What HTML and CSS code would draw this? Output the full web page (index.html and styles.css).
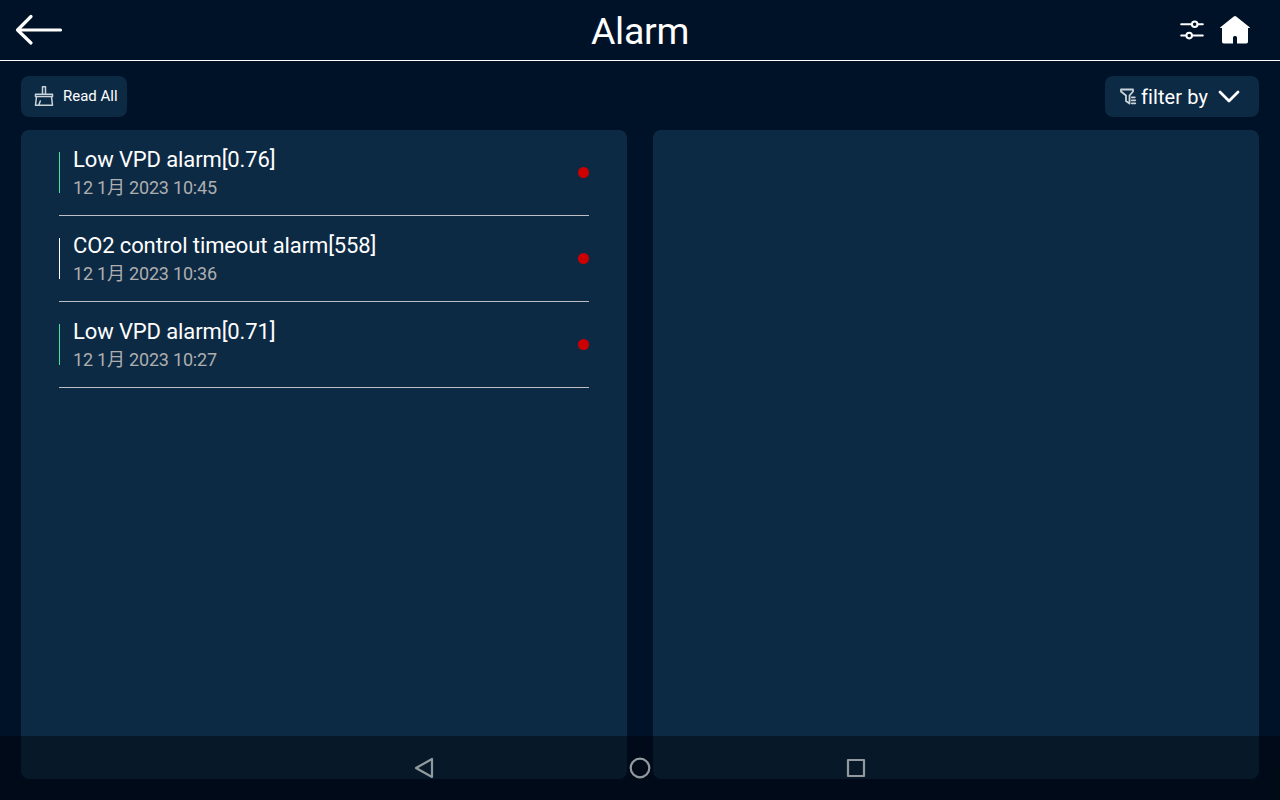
FILE: index.html
```html
<!DOCTYPE html>
<html lang="en">
<head>
<meta charset="utf-8">
<title>Alarm</title>
<link rel="stylesheet" href="styles.css">
</head>
<body>
<header class="header">
  <svg class="back" width="48" height="32" viewBox="0 0 48 32"><path d="M16 2.500 2.500 16 16 29M2.500 16H45.500" /></svg>
  <h1 class="title">Alarm</h1>
  <div class="actions">
    <svg class="sliders" width="24" height="20" viewBox="0 0 24 20"><path d="M1.200 4.300h10.500M17.500 4.300H22.800M1.200 15.600h5M12 15.600h10.800"/><circle cx="14.700" cy="4.300" r="2.800"/><circle cx="9.200" cy="15.600" r="2.800"/></svg>
    <svg class="home" width="30" height="28" viewBox="0 0 30 28"><path d="M13.800.6q1.200-1 2.400 0L29.600 11.200q.8.800-.2.800H28v13.800q0 1.700-1.700 1.700H17v-6q0-1.500-1.500-1.500h-1q-1.500 0-1.500 1.500v6H3.700q-1.700 0-1.700-1.700V12H.6q-1 0-.2-.8z"/></svg>
  </div>
</header>
<div class="toolbar">
  <button class="button read"><svg width="20" height="22" viewBox="0 0 20 22"><path d="M8.500 7.500V.8h3v6.700M1.500 8.300h17v2.200h-17zM2.500 10.500 1.500 19.300h17l-1-8.800M4.800 19l1.500-4"/></svg><span>Read All</span></button>
  <button class="button filter"><svg width="17" height="18" viewBox="0 0 17 18"><path d="M1 1.500h12v2L9.500 7.500v8L6 13V7.500L1 3.500zM11.800 9.300h3M11.800 12.300h3.500M11.800 15.300h3.500"/></svg><span>filter by</span><svg class="chevron" width="22" height="14" viewBox="0 0 22 14"><path d="m2 2 9 9 9-9"/></svg></button>
</div>
<main class="panels">
  <section class="panel">
    <article class="alarm"><div class="copy active"><h2>Low VPD alarm[0.76]</h2><time>12 1月 2023 10:45</time></div><i class="dot"></i></article>
    <article class="alarm"><div class="copy"><h2>CO2 control timeout alarm[558]</h2><time>12 1月 2023 10:36</time></div><i class="dot"></i></article>
    <article class="alarm"><div class="copy active"><h2>Low VPD alarm[0.71]</h2><time>12 1月 2023 10:27</time></div><i class="dot"></i></article>
  </section>
  <section class="panel"></section>
</main>
<nav class="system">
  <svg width="24" height="24" viewBox="0 0 24 24"><path d="M20 3v18L4 12z"/></svg>
  <svg width="24" height="24" viewBox="0 0 24 24"><circle cx="12" cy="12" r="9.300"/></svg>
  <svg width="24" height="24" viewBox="0 0 24 24"><path d="M4 4h16v16H4z"/></svg>
</nav>
</body>
</html>
```
FILE: styles.css
```css
* { box-sizing: border-box; }
body { margin: 0; height: 800px; overflow: hidden; background: #001228; color: #fff; font-family: Roboto, "Noto Sans CJK SC", sans-serif; display: flex; flex-direction: column; }
h1, h2 { margin: 0; font-weight: 400; }
svg { display: block; flex: none; fill: none; stroke: #fff; stroke-linecap: round; stroke-linejoin: round; }
.header { height: 61px; flex: none; border-bottom: 1px solid #fff; padding: 0 30px 0 15px; display: grid; grid-template-columns: 1fr auto 1fr; align-items: center; }
.back { stroke-width: 3.200; margin-top: -1px; }
.title { font-size: 37.500px; line-height: 44px; letter-spacing: -.3px; margin-top: 1px; transform: translateX(7.500px); }
.actions { display: flex; justify-content: flex-end; align-items: center; gap: 16px; }
.sliders { stroke-width: 2; }
.home { fill: #fff; stroke: none; }
.toolbar { display: flex; justify-content: space-between; padding: 15px 21px 13px; }
.button { height: 41px; border: 0; border-radius: 8px; padding: 0; background: #0d2a45; color: #fff; font-family: inherit; display: flex; align-items: center; }
.read { width: 106px; padding-left: 13px; font-size: 15px; gap: 9px; }
.read span { padding-bottom: 2px; }
.read svg { stroke: #cbd3da; stroke-width: 1.500; }
.filter { width: 154px; padding-left: 15px; font-size: 20px; letter-spacing: .1px; gap: 4px; }
.filter svg { stroke: #cbd3da; stroke-width: 1.800; }
.filter .chevron { stroke: #fff; stroke-width: 2.800; margin-left: 6px; }
.panels { display: grid; grid-template-columns: 1fr 1fr; gap: 26px; padding: 0 21px; height: 649px; }
.panel { background: #0d2a45; border-radius: 8px; padding: 0 38px; }
.alarm { height: 86px; border-bottom: 1px solid #c0bec5; display: flex; align-items: center; justify-content: space-between; }
.copy { height: 41px; border-left: 1px solid #fff; padding: 2px 0 0 13px; display: flex; flex-direction: column; justify-content: center; white-space: nowrap; }
.copy.active { border-left-color: #42e695; }
.copy h2 { font-size: 22px; line-height: 28px; letter-spacing: -.12px; }
.copy time { font-size: 18px; line-height: 28px; letter-spacing: -.2px; color: #aeaeae; }
.dot { width: 11px; height: 11px; border-radius: 50%; background: #c00; }
.system { position: absolute; left: 0; right: 0; bottom: 0; height: 64px; background: rgba(0, 0, 0, .4); display: flex; justify-content: center; align-items: center; gap: 192px; }
.system svg { stroke: #939a9f; stroke-width: 2.200; stroke-linejoin: round; }
```
